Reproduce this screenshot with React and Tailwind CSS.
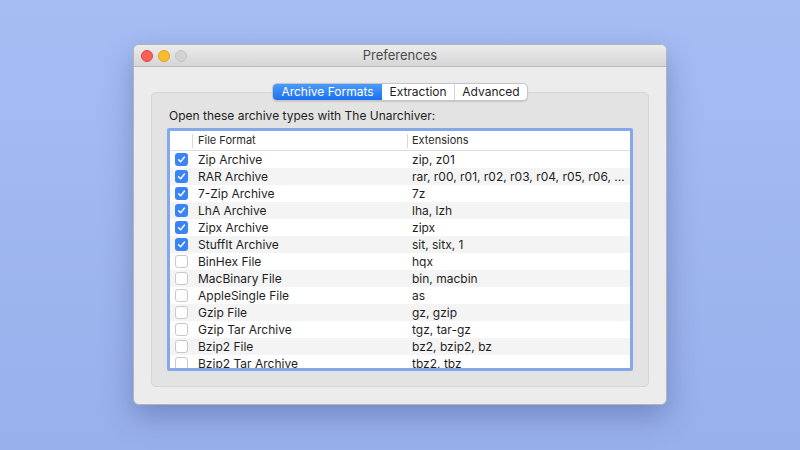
import React from "react";

const rows = [
  ["Zip Archive", "zip, z01", true],
  ["RAR Archive", "rar, r00, r01, r02, r03, r04, r05, r06, r07, r08, r09", true],
  ["7-Zip Archive", "7z", true],
  ["LhA Archive", "lha, lzh", true],
  ["Zipx Archive", "zipx", true],
  ["StuffIt Archive", "sit, sitx, 1", true],
  ["BinHex File", "hqx", false],
  ["MacBinary File", "bin, macbin", false],
  ["AppleSingle File", "as", false],
  ["Gzip File", "gz, gzip", false],
  ["Gzip Tar Archive", "tgz, tar-gz", false],
  ["Bzip2 File", "bz2, bzip2, bz", false],
  ["Bzip2 Tar Archive", "tbz2, tbz", false],
];

const Check = ({ on }) =>
  on ? (
    <div className="w-[13px] h-[13px] rounded-[3px] bg-[#3b84f6] flex items-center justify-center">
      <svg width="9" height="9" viewBox="0 0 10 10">
        <path d="M1.8 5.2 L4 7.6 L8.3 2.2" fill="none" stroke="white" strokeWidth="1.6" strokeLinecap="round" strokeLinejoin="round" />
      </svg>
    </div>
  ) : (
    <div className="w-[13px] h-[13px] rounded-[3px] bg-white border border-[#c9c9c9]" />
  );

export default function App() {
  return (
    <div
      className="w-[800px] h-[450px] overflow-hidden bg-gradient-to-b from-[#a6bdf4] to-[#98b0ec] pt-[44px] pl-[133px]"
      style={{ fontFamily: "Inter, 'Open Sans', sans-serif" }}
    >
      <div className="w-[534px] h-[361px] rounded-[6px] overflow-hidden bg-[#ececec] border border-[#b4b4b4] shadow-[0_12px_30px_rgba(40,60,120,0.35)] flex flex-col">
        {/* title bar */}
        <div className="h-[22px] bg-gradient-to-b from-[#ececec] to-[#d6d6d6] border-b border-[#bcbcbc] flex items-center relative shrink-0">
          <div className="flex gap-[5px] pl-[7px]">
            <div className="w-[12px] h-[12px] rounded-full bg-[#fc5f57] border border-[#e0443e]" />
            <div className="w-[12px] h-[12px] rounded-full bg-[#fdbc2e] border border-[#dea123]" />
            <div className="w-[12px] h-[12px] rounded-full bg-[#d3d3d3] border border-[#c2c2c2]" />
          </div>
          <div className="absolute inset-0 flex items-center justify-center text-[13px] text-[#4b4b4b]">
            Preferences
          </div>
        </div>

        {/* body */}
        <div className="flex-1 flex flex-col px-[17px] pt-[16px] pb-[17px]">
          <div className="flex justify-center relative z-10 h-[18px]">
            <div className="flex h-[18px] rounded-[5px] border border-[#c6c6c6] bg-white text-[12px] text-[#1e1e1e] overflow-hidden shadow-[0_0.5px_1px_rgba(0,0,0,0.12)]">
              <div className="w-[109px] flex items-center justify-center bg-gradient-to-b from-[#4b9bfb] to-[#1a6fef] text-white">
                Archive Formats
              </div>
              <div className="w-[73px] flex items-center justify-center border-r border-[#d6d6d6]">
                Extraction
              </div>
              <div className="w-[72px] flex items-center justify-center">Advanced</div>
            </div>
          </div>

          <div className="-mt-[9px] flex-1 bg-[#e3e3e3] border border-[#d6d6d6] rounded-[5px] pt-[15px] pl-[15px] pr-[14px] flex flex-col">
            <div className="text-[12px] text-[#1e1e1e] pl-[2px] h-[16px] leading-[16px]">
              Open these archive types with The Unarchiver:
            </div>
            <div className="mt-[4px] h-[243px] w-[466px] rounded-[2px] border-[3px] border-[#84a8ea] bg-white overflow-hidden flex flex-col">
              <div className="h-[20px] shrink-0 flex items-center border-b border-[#dcdcdc] text-[11px] text-[#2a2a2a]">
                <div className="w-[23px] h-[14px] border-r border-[#d9d9d9]" />
                <div className="w-[215px] h-[14px] border-r border-[#d9d9d9] pl-[5px] flex items-center">File Format</div>
                <div className="pl-[4px] flex items-center">Extensions</div>
              </div>
              <div className="flex-1 overflow-hidden">
                {rows.map(([name, ext, on], i) => (
                  <div
                    key={name}
                    className={
                      "h-[17px] flex items-center text-[12px] text-[#1e1e1e] " +
                      (i % 2 ? "bg-[#f4f4f4]" : "bg-white")
                    }
                  >
                    <div className="w-[23px] flex justify-center">
                      <Check on={on} />
                    </div>
                    <div className="w-[215px] pl-[5px] truncate">{name}</div>
                    <div className="w-[219px] pl-[4px] truncate">{ext}</div>
                  </div>
                ))}
              </div>
            </div>
          </div>
        </div>
      </div>
    </div>
  );
}
